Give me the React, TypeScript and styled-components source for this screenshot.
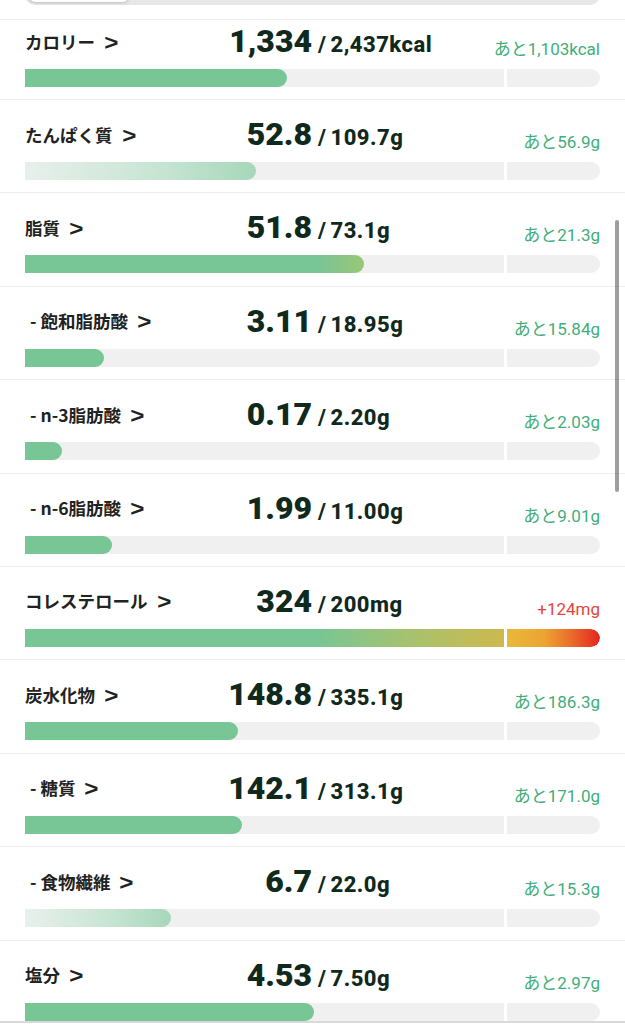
import React from 'react';
import styled, { createGlobalStyle, css } from 'styled-components';

type Tone = 'solid' | 'light' | 'warn' | 'over';

interface Nutrient {
  name: string;
  sub?: boolean;
  value: string;
  target: string;
  rest: string;
  ratio: number;
  tone: Tone;
}

const nutrients: Nutrient[] = [
  { name: 'カロリー', value: '1,334', target: '2,437kcal', rest: 'あと1,103kcal', ratio: 1334 / 2437, tone: 'solid' },
  { name: 'たんぱく質', value: '52.8', target: '109.7g', rest: 'あと56.9g', ratio: 52.8 / 109.7, tone: 'light' },
  { name: '脂質', value: '51.8', target: '73.1g', rest: 'あと21.3g', ratio: 51.8 / 73.1, tone: 'warn' },
  { name: '飽和脂肪酸', sub: true, value: '3.11', target: '18.95g', rest: 'あと15.84g', ratio: 3.11 / 18.95, tone: 'solid' },
  { name: 'n-3脂肪酸', sub: true, value: '0.17', target: '2.20g', rest: 'あと2.03g', ratio: 0.17 / 2.2, tone: 'solid' },
  { name: 'n-6脂肪酸', sub: true, value: '1.99', target: '11.00g', rest: 'あと9.01g', ratio: 1.99 / 11, tone: 'solid' },
  { name: 'コレステロール', value: '324', target: '200mg', rest: '+124mg', ratio: 324 / 200, tone: 'over' },
  { name: '炭水化物', value: '148.8', target: '335.1g', rest: 'あと186.3g', ratio: 148.8 / 335.1, tone: 'solid' },
  { name: '糖質', sub: true, value: '142.1', target: '313.1g', rest: 'あと171.0g', ratio: 142.1 / 313.1, tone: 'solid' },
  { name: '食物繊維', sub: true, value: '6.7', target: '22.0g', rest: 'あと15.3g', ratio: 6.7 / 22, tone: 'light' },
  { name: '塩分', value: '4.53', target: '7.50g', rest: 'あと2.97g', ratio: 4.53 / 7.5, tone: 'solid' },
];

const GREEN = '#78c596';

const GlobalStyle = createGlobalStyle`
  html, body {
    margin: 0;
    padding: 0;
    background: #fff;
  }
  body {
    font-family: Roboto, "Noto Sans CJK JP", sans-serif;
  }
`;

const Screen = styled.div`
  position: relative;
  width: 625px;
  height: 1024px;
  display: flex;
  flex-direction: column;
  overflow: hidden;
  background: #fff;
`;

const TopBar = styled.div`
  height: 19px;
  flex-shrink: 0;
  padding: 0 25px;
  border-bottom: 1px solid #ededed;
  overflow: hidden;
`;

const Segmented = styled.div`
  margin-top: -30px;
  height: 35px;
  border-radius: 10px;
  background: #e7e7e7;
  display: flex;
  align-items: stretch;
  padding: 0 3px;
`;

const SegmentThumb = styled.div`
  width: 102px;
  height: 32px;
  border-radius: 8px;
  background: #fff;
  box-shadow: 0 1px 3px rgba(0, 0, 0, 0.18);
`;

const List = styled.div`
  flex: 1;
  overflow: hidden;
`;

const Row = styled.div<{ $first?: boolean }>`
  padding: ${(p) => (p.$first ? '3px 25px 12px' : '16px 25px 12.4px')};
  border-bottom: 1px solid #ededed;
`;

const Header = styled.div`
  display: grid;
  grid-template-columns: 175px 112px 1fr auto;
  align-items: baseline;
  height: 36px;
`;

const Label = styled.div<{ $sub?: boolean }>`
  align-self: center;
  display: flex;
  align-items: center;
  padding-left: ${(p) => (p.$sub ? '5px' : '0')};
  font-family: "Noto Sans CJK JP", sans-serif;
  font-size: 17.5px;
  font-weight: 700;
  color: #1f2321;
  white-space: nowrap;
`;

const Chevron = styled.span`
  margin-left: 10px;
  padding-top: 3px;
  font-family: "Liberation Sans", sans-serif;
  font-size: 22px;
  line-height: 1;
  font-weight: 700;
  transform: scaleX(1.1);
`;

const Value = styled.div`
  text-align: right;
  font-family: Roboto, sans-serif;
  font-size: 32px;
  line-height: 36px;
  font-weight: 900;
  color: #10291d;
`;

const Target = styled.div`
  padding-left: 6px;
  font-family: Roboto, sans-serif;
  font-size: 22px;
  font-weight: 800;
  letter-spacing: 0.5px;
  color: #10291d;
  white-space: nowrap;
`;

const Slash = styled.span`
  margin-right: 4px;
`;

const Rest = styled.div<{ $over?: boolean }>`
  align-self: end;
  line-height: 20px;
  font-family: Roboto, "Noto Sans CJK JP", sans-serif;
  font-size: 17px;
  color: ${(p) => (p.$over ? '#e5443c' : '#3fae7b')};
  white-space: nowrap;
`;

const Track = styled.div`
  margin-top: 10px;
  display: grid;
  grid-template-columns: 1fr 93px;
  gap: 3px;
  height: 18px;
`;

const Segment = styled.div<{ $end?: boolean }>`
  background: #f0f0f0;
  overflow: hidden;
  border-radius: ${(p) => (p.$end ? '0 9px 9px 0' : '0')};
`;

const toneFill = {
  solid: css`background: ${GREEN};`,
  light: css`background: linear-gradient(to right, #e8f0ec 0%, #c6e4d2 60%, #a6d7ba 100%);`,
  warn: css`background: linear-gradient(to right, ${GREEN} 0%, ${GREEN} 86%, #99c677 100%);`,
  over: css`background: linear-gradient(to right, ${GREEN} 0%, ${GREEN} 61%, #a6c26f 80%, #cdb94c 100%);`,
};

const Fill = styled.div<{ $tone: Tone; $full?: boolean }>`
  height: 100%;
  border-radius: ${(p) => (p.$full ? '0' : '0 9px 9px 0')};
  ${(p) => toneFill[p.$tone]}
`;

const OverFill = styled.div`
  height: 100%;
  border-radius: 0 9px 9px 0;
  background: linear-gradient(to right, #e8b93a 0%, #eca432 40%, #ea6a2a 70%, #e3261f 100%);
`;

const Footer = styled.div`
  height: 1px;
  flex-shrink: 0;
  border-top: 2px solid #d9d9d9;
`;

const ScrollThumb = styled.div`
  position: absolute;
  top: 220px;
  right: 6px;
  width: 4px;
  height: 272px;
  border-radius: 2px;
  background: rgba(0, 0, 0, 0.38);
`;

const NutrientRow: React.FC<{ item: Nutrient; first?: boolean }> = ({ item, first }) => {
  const main = Math.min(item.ratio, 1);
  const extra = item.ratio > 1 ? Math.min(((item.ratio - 1) * 479) / 93, 1) : 0;
  return (
    <Row $first={first}>
      <Header>
        <Label $sub={item.sub}>
          {item.sub ? '- ' : ''}
          {item.name}
          <Chevron>&gt;</Chevron>
        </Label>
        <Value>{item.value}</Value>
        <Target>
          <Slash>/</Slash>
          {item.target}
        </Target>
        <Rest $over={item.tone === 'over'}>{item.rest}</Rest>
      </Header>
      <Track>
        <Segment>
          <Fill $tone={item.tone} $full={main >= 1} style={{ width: `${main * 100}%` }} />
        </Segment>
        <Segment $end>
          {extra > 0 && <OverFill style={{ width: `${extra * 100}%` }} />}
        </Segment>
      </Track>
    </Row>
  );
};

const App: React.FC = () => {
  return (
    <Screen>
      <GlobalStyle />
      <TopBar>
        <Segmented>
          <SegmentThumb />
        </Segmented>
      </TopBar>
      <List>
        {nutrients.map((item, i) => (
          <NutrientRow key={item.name} item={item} first={i === 0} />
        ))}
      </List>
      <Footer />
      <ScrollThumb />
    </Screen>
  );
};

export default App;
